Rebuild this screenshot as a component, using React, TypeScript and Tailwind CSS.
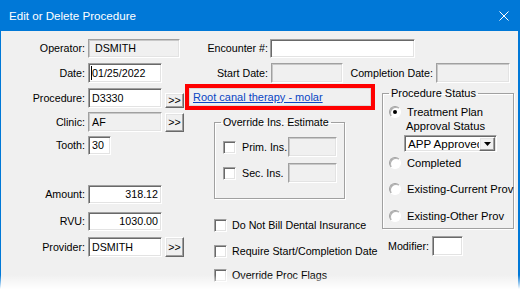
import React from "react";

const sunken =
  "border border-[#a0a0a0] border-b-white border-r-white shadow-[inset_1px_1px_0_#696969,inset_-1px_-1px_0_#e3e3e3]";
const sunkenLight =
  "border border-[#a0a0a0] border-b-white border-r-white shadow-[inset_1px_1px_0_#c8c8c8,inset_-1px_-1px_0_#e3e3e3]";
const raised =
  "border border-white border-b-[#696969] border-r-[#696969] shadow-[inset_-1px_-1px_0_#a0a0a0,inset_1px_1px_0_#e3e3e3]";
const etched = "border border-[#a0a0a0] shadow-[inset_1px_1px_0_#fff,1px_1px_0_#fff]";

type BoxProps = {
  className?: string;
  disabled?: boolean;
  children?: React.ReactNode;
};

const Box = ({ className = "", disabled, children }: BoxProps) => (
  <div
    className={`flex shrink-0 items-center whitespace-nowrap ${
      disabled ? `bg-[#f0f0f0] ${sunkenLight}` : `bg-white ${sunken}`
    } ${className}`}
  >
    {children}
  </div>
);

const MoreButton = ({ className = "" }: { className?: string }) => (
  <div
    className={`ml-[3px] flex w-[19px] shrink-0 items-center justify-center bg-[#f0f0f0] leading-none ${raised} ${className}`}
  >
    &gt;&gt;
  </div>
);

const Check = () => <span className={`block size-[13px] shrink-0 bg-white ${sunken}`} />;

const Radio = ({ checked }: { checked?: boolean }) => (
  <span className="flex size-[12px] shrink-0 items-center justify-center rounded-full border border-[#a0a0a0] border-b-white border-r-white bg-white shadow-[inset_1px_1px_0_#b0b0b0]">
    {checked && <span className="block size-[4px] rounded-full bg-black" />}
  </span>
);

const Label = ({ className = "", children }: { className?: string; children: React.ReactNode }) => (
  <span className={`shrink-0 whitespace-nowrap text-right ${className}`}>{children}</span>
);

export default function App() {
  return (
    <div className="relative flex h-[289px] w-[520px] flex-col overflow-hidden bg-[#f0f0f0] font-['Liberation_Sans',Arial,sans-serif] text-[10.7px] leading-[13px] text-black">
      <div className="flex h-[31px] shrink-0 items-center justify-between bg-[#0078d7] pl-[9px] pr-[11px] text-white">
        <span className="text-[11.6px] leading-[14px]">Edit or Delete Procedure</span>
        <svg width="10" height="10" viewBox="0 0 10 10">
          <path d="M0.5 0.5L9.5 9.5M9.5 0.5L0.5 9.5" stroke="white" strokeWidth="1" />
        </svg>
      </div>

      <div className="flex flex-1 flex-col border-l border-r-2 border-[#0078d7]">
        {/* top rows */}
        <div className="mt-[8px] flex h-[19px] items-center">
          <Label className="w-[84px]">Operator:</Label>
          <Box disabled className="ml-[3px] h-[19px] w-[92px] pl-[6px]">
            DSMITH
          </Box>
          <Label className="w-[88px]">Encounter #:</Label>
          <Box className="ml-[2px] h-[19px] w-[145px]" />
        </div>
        <div className="mt-[5px] flex h-[20px] items-center">
          <Label className="w-[84px]">Date:</Label>
          <Box className="ml-[3px] h-[20px] w-[74px] pl-[2px]">
            <span className="block h-[14px] w-px bg-black" />
            <span>01/25/2022</span>
          </Box>
          <Label className="w-[106px]">Start Date:</Label>
          <Box disabled className="ml-[3px] h-[20px] w-[72px]" />
          <Label className="w-[90px]">Completion Date:</Label>
          <Box disabled className="ml-[3px] h-[20px] w-[74px]" />
        </div>

        <div className="mt-[1px] flex">
          {/* left column */}
          <div className="flex w-[184px] shrink-0 flex-col">
            <div className="mt-[4px] flex h-[20px] items-center">
              <Label className="w-[84px]">Procedure:</Label>
              <Box className="ml-[3px] h-[20px] w-[74px] pl-[3px]">D3330</Box>
              <MoreButton className="h-[15px] self-end" />
            </div>
            <div className="mt-[4px] flex h-[20px] items-center">
              <Label className="w-[84px]">Clinic:</Label>
              <Box disabled className="ml-[3px] h-[20px] w-[74px] pl-[3px]">
                AF
              </Box>
              <MoreButton className="h-[19px] self-end" />
            </div>
            <div className="mt-[4px] flex h-[19px] items-center">
              <Label className="w-[84px]">Tooth:</Label>
              <Box className="ml-[3px] h-[19px] w-[23px] pl-[3px]">30</Box>
            </div>
            <div className="mt-[30px] flex h-[19px] items-center">
              <Label className="w-[84px]">Amount:</Label>
              <Box className="ml-[3px] h-[19px] w-[74px] justify-end pr-[3px]">318.12</Box>
            </div>
            <div className="mt-[8px] flex h-[19px] items-center">
              <Label className="w-[84px]">RVU:</Label>
              <Box className="ml-[3px] h-[19px] w-[74px] justify-end pr-[3px]">1030.00</Box>
            </div>
            <div className="mt-[6px] flex h-[20px] items-center">
              <Label className="w-[84px]">Provider:</Label>
              <Box className="ml-[3px] h-[20px] w-[74px] pl-[3px]">DSMITH</Box>
              <MoreButton className="h-[20px]" />
            </div>
          </div>

          {/* middle column */}
          <div className="flex w-[195px] shrink-0 flex-col">
            <div className="h-[26px] w-[190px] border-4 border-[#ff0000]">
              <div className="flex h-full items-center border border-[#d9d9d9] pl-[3px]">
                <span className="text-[11px] text-[#0a46c4] underline underline-offset-[1px]">
                  Root canal therapy - molar
                </span>
              </div>
            </div>

            <fieldset className={`ml-[29px] mt-[6px] w-[131px] pb-[15px] ${etched}`}>
              <legend className="ml-[6px] px-[2px] leading-[13px]">Override Ins. Estimate</legend>
              <div className="mt-[8px] flex h-[20px] items-center">
                <span className="ml-[8px]">
                  <Check />
                </span>
                <span className="ml-[6px] whitespace-nowrap">Prim. Ins.</span>
                <Box disabled className="ml-auto mr-[7px] h-[20px] w-[49px]" />
              </div>
              <div className="mt-[6px] flex h-[20px] items-center">
                <span className="ml-[8px]">
                  <Check />
                </span>
                <span className="ml-[6px] whitespace-nowrap">Sec. Ins.</span>
                <Box disabled className="ml-auto mr-[7px] h-[20px] w-[49px]" />
              </div>
            </fieldset>

            <div className="mt-[20px] flex h-[13px] items-center">
              <span className="ml-[29px]">
                <Check />
              </span>
              <span className="ml-[5px] whitespace-nowrap">Do Not Bill Dental Insurance</span>
            </div>
            <div className="mt-[13px] flex h-[13px] items-center">
              <span className="ml-[29px]">
                <Check />
              </span>
              <span className="ml-[5px] whitespace-nowrap">Require Start/Completion Date</span>
            </div>
            <div className="mt-[11px] flex h-[13px] items-center">
              <span className="ml-[29px]">
                <Check />
              </span>
              <span className="ml-[5px] whitespace-nowrap">Override Proc Flags</span>
            </div>
          </div>

          {/* right column */}
          <div className="ml-[2px] flex w-[128px] shrink-0 flex-col">
            <fieldset className={`mt-[3px] w-[128px] pb-[6px] ${etched}`}>
              <legend className="ml-[6px] px-[2px] text-[11px] leading-[13px]">Procedure Status</legend>
              <div className="mt-[6px] flex h-[12px] items-center">
                <span className="ml-[6px]">
                  <Radio checked />
                </span>
                <span className="ml-[6px] whitespace-nowrap text-[11.2px]">Treatment Plan</span>
              </div>
              <div className="ml-[23px] mt-[2px] whitespace-nowrap text-[11.2px]">Approval Status</div>
              <div className={`ml-[21px] mt-[2px] flex h-[17px] w-[93px] items-center bg-white ${sunken}`}>
                <span className="flex-1 overflow-hidden whitespace-nowrap pl-[3px] text-[11.6px]">
                  APP Approved
                </span>
                <span
                  className={`mr-[1px] flex h-[14px] w-[16px] shrink-0 items-center justify-center bg-[#f0f0f0] ${raised}`}
                >
                  <svg width="7" height="4" viewBox="0 0 7 4">
                    <path d="M0 0H7L3.5 4Z" fill="black" />
                  </svg>
                </span>
              </div>
              <div className="mt-[5px] flex h-[12px] items-center">
                <span className="ml-[6px]">
                  <Radio />
                </span>
                <span className="ml-[6px] whitespace-nowrap text-[11.2px]">Completed</span>
              </div>
              <div className="mt-[14px] flex h-[12px] items-center">
                <span className="ml-[6px]">
                  <Radio />
                </span>
                <span className="ml-[6px] whitespace-nowrap text-[11.2px]">Existing-Current Prov</span>
              </div>
              <div className="mt-[15px] flex h-[12px] items-center">
                <span className="ml-[6px]">
                  <Radio />
                </span>
                <span className="ml-[6px] whitespace-nowrap text-[11.2px]">Existing-Other Prov</span>
              </div>
            </fieldset>
            <div className="mt-[7px] flex h-[20px] items-center">
              <span className="ml-[6px] whitespace-nowrap">Modifier:</span>
              <Box className="ml-[3px] h-[20px] w-[31px]" />
            </div>
          </div>
        </div>
      </div>

      <div className="pointer-events-none absolute inset-x-0 bottom-0 h-[14px] bg-linear-to-b from-white/0 to-white" />
    </div>
  );
}
